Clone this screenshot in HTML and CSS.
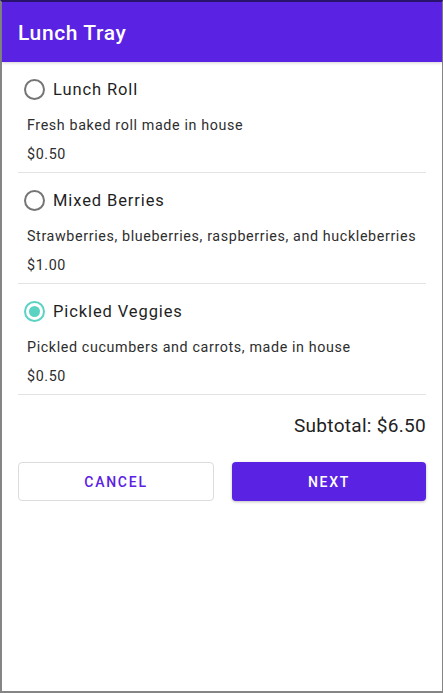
FILE: index.html
```html
<!DOCTYPE html>
<html>
<head>
<meta charset="utf-8">
<link rel="stylesheet" href="styles.css">
</head>
<body>
<div class="frame">
  <header class="appbar"><h1 class="title">Lunch Tray</h1></header>
  <main class="content">
    <div class="item">
      <div class="radio-row"><span class="radio"></span><span class="label">Lunch Roll</span></div>
      <p class="desc">Fresh baked roll made in house</p>
      <p class="price">$0.50</p>
    </div>
    <div class="item">
      <div class="radio-row"><span class="radio"></span><span class="label">Mixed Berries</span></div>
      <p class="desc">Strawberries, blueberries, raspberries, and huckleberries</p>
      <p class="price">$1.00</p>
    </div>
    <div class="item">
      <div class="radio-row"><span class="radio checked"></span><span class="label">Pickled Veggies</span></div>
      <p class="desc">Pickled cucumbers and carrots, made in house</p>
      <p class="price">$0.50</p>
    </div>
    <div class="subtotal">Subtotal: $6.50</div>
    <div class="buttons">
      <button class="btn btn-outline">CANCEL</button>
      <button class="btn btn-filled">NEXT</button>
    </div>
  </main>
</div>
</body>
</html>
```
FILE: styles.css
```css
html, body {
  margin: 0;
  padding: 0;
  background: #ffffff;
}
body {
  font-family: Roboto, "Liberation Sans", sans-serif;
}
.frame {
  box-sizing: border-box;
  width: 443px;
  height: 693px;
  border-left: 2px solid #858585;
  border-right: 1px solid #858585;
  border-bottom: 2px solid #858585;
  border-top: 2px solid #2a1470;
  display: flex;
  flex-direction: column;
}
.appbar {
  height: 60px;
  background: #5a22e2;
  display: flex;
  align-items: center;
  padding: 0 16px;
  box-shadow: 0 1px 3px rgba(0,0,0,0.18);
}
.title {
  margin: 0;
  color: #ffffff;
  font-size: 21px;
  font-weight: 500;
  letter-spacing: 0.6px;
  margin-top: 1px;
}
.content {
  padding: 0 16px;
  display: flex;
  flex-direction: column;
}
.item {
  padding-top: 3px;
  border-bottom: 1px solid #e3e3e3;
  padding-bottom: 8px;
}
.radio-row {
  height: 48px;
  display: flex;
  align-items: center;
  padding-left: 6px;
}
.radio {
  box-sizing: border-box;
  width: 21px;
  height: 21px;
  border-radius: 50%;
  border: 2px solid #757575;
  margin-right: 8px;
  position: relative;
}
.radio.checked {
  border-color: #5ad3c3;
}
.radio.checked::after {
  content: "";
  position: absolute;
  left: 3px;
  top: 3px;
  width: 11px;
  height: 11px;
  border-radius: 50%;
  background: #5ad3c3;
}
.label {
  font-size: 16.5px;
  color: #1f1f1f;
  letter-spacing: 0.9px;
}
.desc {
  margin: 2px 0 0 9px;
  font-size: 14.3px;
  line-height: 20px;
  color: #2e2e2e;
  letter-spacing: 0.62px;
}
.price {
  margin: 9px 0 0 9px;
  font-size: 14.3px;
  line-height: 20px;
  color: #2e2e2e;
  letter-spacing: 0.62px;
}
.subtotal {
  text-align: right;
  font-size: 19px;
  color: #222222;
  margin-top: 19px;
  line-height: 24px;
  letter-spacing: 0.3px;
}
.buttons {
  display: flex;
  gap: 18px;
  margin-top: 24px;
}
.btn {
  flex: 1;
  height: 39px;
  border-radius: 4px;
  font-family: Roboto, "Liberation Sans", sans-serif;
  font-size: 14px;
  font-weight: 500;
  letter-spacing: 1.75px;
  cursor: pointer;
}
.btn-outline {
  background: #ffffff;
  border: 1px solid #dcdcdc;
  color: #5b22e3;
}
.btn-filled {
  background: #5a22e2;
  border: none;
  color: #ffffff;
  box-shadow: 0 1px 3px rgba(0,0,0,0.25);
}
```
